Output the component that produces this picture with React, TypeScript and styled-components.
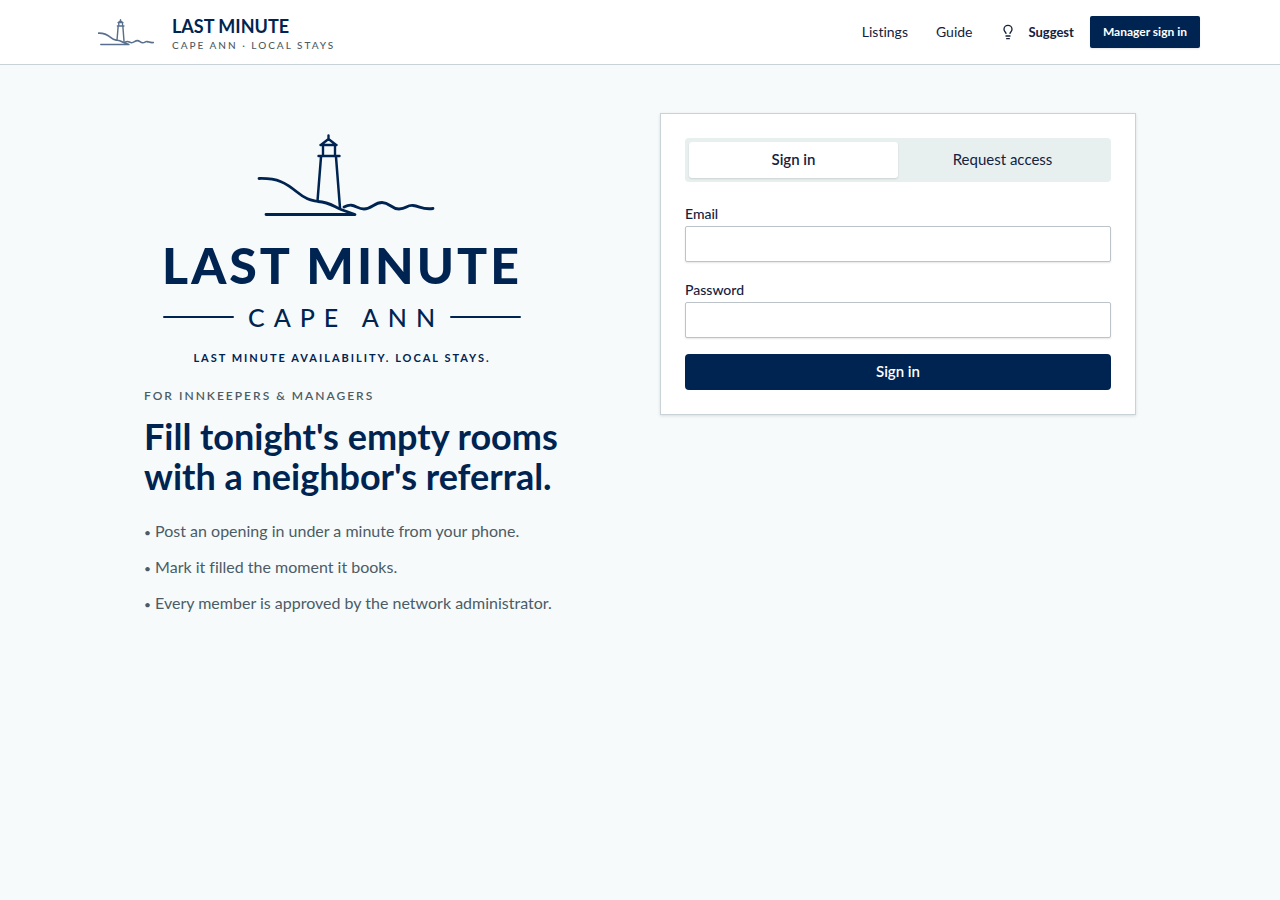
import React, { useState } from "react";
import styled, { createGlobalStyle } from "styled-components";
import { Lightbulb } from "lucide-react";

const navy = "#002451";
const ink = "#14213d";
const muted = "#4b5c66";
const line = "#c9d2d6";
const brandFont = `Lato, "Liberation Sans", sans-serif`;

const GlobalStyle = createGlobalStyle`
  * { box-sizing: border-box; }
  body {
    margin: 0;
    background: #f6fafb;
    color: ${ink};
    font-family: Lato, "Liberation Sans", sans-serif;
    font-size: 16px;
    line-height: 24px;
    font-variant-ligatures: none;
  }
  button, input { font: inherit; color: inherit; }
  h1, p, ul { margin: 0; padding: 0; }
`;

const Header = styled.header`
  background: #fff;
  border-bottom: 1px solid ${line};
`;

const HeaderInner = styled.div`
  max-width: 1152px;
  min-height: 64px;
  margin: 0 auto;
  padding: 0 16px;
  display: flex;
  align-items: center;
  justify-content: space-between;
`;

const Brand = styled.a`
  display: flex;
  align-items: center;
  gap: 18px;
  padding-left: 18px;
  text-decoration: none;
  color: ${navy};
`;

const BrandMark = styled.svg`
  width: 56px;
  height: 28px;
  opacity: 0.65;
`;

const BrandText = styled.span`
  display: flex;
  flex-direction: column;
  padding-top: 4px;
`;

const BrandName = styled.span`
  font: 700 18px/22px ${brandFont};
`;

const BrandSub = styled.span`
  font-size: 10px;
  line-height: 16px;
  font-weight: 500;
  letter-spacing: 2px;
  text-transform: uppercase;
  color: ${muted};
`;

const Nav = styled.nav`
  display: flex;
  align-items: center;
  gap: 28px;
`;

const NavLink = styled.a`
  font-size: 14px;
  line-height: 20px;
  color: ${ink};
  text-decoration: none;
`;

const Actions = styled.div`
  display: flex;
  align-items: center;
  gap: 16px;
`;

const SmallButton = styled.button<{ $solid?: boolean }>`
  display: flex;
  align-items: center;
  gap: 12px;
  height: 32px;
  padding: ${(p) => (p.$solid ? "0 13px" : "0")};
  border: 0;
  border-radius: 2px;
  background: ${(p) => (p.$solid ? navy : "transparent")};
  color: ${(p) => (p.$solid ? "#fff" : ink)};
  box-shadow: ${(p) => (p.$solid ? "0 1px 2px rgba(0, 0, 0, 0.1)" : "none")};
  font-size: ${(p) => (p.$solid ? "12px" : "13px")};
  font-weight: 700;
  cursor: pointer;
`;

const Main = styled.main`
  max-width: 1024px;
  margin: 0 auto;
  padding: 48px 16px;
  display: grid;
  grid-template-columns: 1fr 1fr;
  gap: 40px;
  align-items: start;

  @media (max-width: 768px) {
    grid-template-columns: 1fr;
  }
`;

const Logo = styled.div`
  width: 396px;
  max-width: 100%;
  padding-top: 20px;
  display: flex;
  flex-direction: column;
  align-items: center;
  color: ${navy};
`;

const LogoMark = styled.svg`
  width: 180px;
  height: 84px;
  margin-left: 8px;
`;

const Wordmark = styled.span`
  margin-top: 20px;
  font: 900 50px/56px ${brandFont};
  letter-spacing: 3px;
  white-space: nowrap;
`;

const PlaceRow = styled.span`
  width: 358px;
  max-width: 100%;
  margin-top: 8px;
  display: flex;
  align-items: center;
  gap: 14px;

  &::before,
  &::after {
    content: "";
    flex: 1;
    height: 2px;
    border-radius: 1px;
    background: currentColor;
  }
`;

const Place = styled.span`
  font: 500 25px/32px ${brandFont};
  letter-spacing: 9px;
  margin-right: -8px;
  white-space: nowrap;
`;

const Tagline = styled.span`
  margin-top: 17px;
  font: 700 11px/16px ${brandFont};
  letter-spacing: 2px;
`;

const Eyebrow = styled.p`
  margin-top: 22px;
  font-size: 12px;
  line-height: 16px;
  font-weight: 600;
  letter-spacing: 2px;
  text-transform: uppercase;
  color: ${muted};
`;

const Title = styled.h1`
  margin-top: 12px;
  font: 700 36px/40px ${brandFont};
  color: ${navy};
`;

const Points = styled.ul`
  margin-top: 23px;
  display: flex;
  flex-direction: column;
  gap: 12px;
  list-style: none;
  color: ${muted};
`;

const Bullet = styled.span`
  font-size: 12px;
  line-height: 12px;
`;

const Card = styled.section`
  padding: 24px;
  background: #fff;
  border: 1px solid ${line};
  box-shadow: 0 1px 3px rgba(0, 0, 0, 0.12);
`;

const Tabs = styled.div`
  display: grid;
  grid-template-columns: 1fr 1fr;
  padding: 4px;
  border-radius: 4px;
  background: #e8efef;
`;

const Tab = styled.button<{ $active: boolean }>`
  height: 36px;
  padding: 0 12px 2px;
  border: 0;
  border-radius: 3px;
  background: ${(p) => (p.$active ? "#fff" : "transparent")};
  box-shadow: ${(p) => (p.$active ? "0 1px 2px rgba(0, 0, 0, 0.12)" : "none")};
  font-size: 15px;
  font-weight: ${(p) => (p.$active ? 600 : 400)};
  cursor: pointer;
`;

const Form = styled.form`
  margin-top: 20px;
  display: flex;
  flex-direction: column;
  gap: 16px;
`;

const Field = styled.div`
  display: flex;
  flex-direction: column;
`;

const Label = styled.label`
  font-size: 14px;
  line-height: 24px;
  font-weight: 500;
`;

const Input = styled.input`
  width: 100%;
  height: 36px;
  padding: 0 12px;
  border: 1px solid #bcc4c9;
  border-radius: 2px;
  background: #fff;
  box-shadow: 0 1px 2px rgba(0, 0, 0, 0.1);
`;

const Submit = styled.button`
  height: 36px;
  padding: 0 12px 2px;
  border: 0;
  border-radius: 4px;
  background: ${navy};
  color: #fff;
  font-size: 15px;
  font-weight: 600;
  cursor: pointer;
`;

const Lighthouse = ({ strokeWidth }: { strokeWidth: number }) => (
  <g fill="none" stroke="currentColor" strokeWidth={strokeWidth} strokeLinecap="round" strokeLinejoin="round">
    <path d="M259 178.500C278 178 286 183 297 192S312 200 318 201.500C330 202 334 207 341 209.500L355 214.500H266" />
    <path d="M321 157L317.500 201M336 157L340 208" strokeWidth={strokeWidth * 0.9} />
    <path
      d="M318.500 156H339.500M323 146V155M335 146V155M320.500 145H336.500M321.500 144.500L328.500 139L335.500 144.500M328.500 135.500V139"
      strokeWidth={strokeWidth * 0.85}
    />
    <path d="M344 207C354 202 356 209 364 209S374 202.500 382 202.500S391 209 399 209S406 205 413 205.500S422 210 433 208.500" />
  </g>
);

const POINTS = [
  "Post an opening in under a minute from your phone.",
  "Mark it filled the moment it books.",
  "Every member is approved by the network administrator.",
];

export default function App() {
  const [tab, setTab] = useState("signin");
  return (
    <>
      <GlobalStyle />
      <Header>
        <HeaderInner>
          <Brand href="#">
            <BrandMark viewBox="257 132 178 86" aria-hidden="true">
              <Lighthouse strokeWidth={5} />
            </BrandMark>
            <BrandText>
              <BrandName>LAST MINUTE</BrandName>
              <BrandSub>Cape Ann · Local Stays</BrandSub>
            </BrandText>
          </Brand>
          <Nav>
            <NavLink href="#listings">Listings</NavLink>
            <NavLink href="#guide">Guide</NavLink>
            <Actions>
              <SmallButton type="button">
                <Lightbulb size={16} strokeWidth={2} />
                Suggest
              </SmallButton>
              <SmallButton type="button" $solid>
                Manager sign in
              </SmallButton>
            </Actions>
          </Nav>
        </HeaderInner>
      </Header>
      <Main>
        <section>
          <Logo>
            <LogoMark viewBox="256 133 180 84" aria-hidden="true">
              <Lighthouse strokeWidth={2.8} />
            </LogoMark>
            <Wordmark>LAST MINUTE</Wordmark>
            <PlaceRow>
              <Place>CAPE ANN</Place>
            </PlaceRow>
            <Tagline>LAST MINUTE AVAILABILITY. LOCAL STAYS.</Tagline>
          </Logo>
          <Eyebrow>For innkeepers &amp; managers</Eyebrow>
          <Title>Fill tonight's empty rooms with a neighbor's referral.</Title>
          <Points>
            {POINTS.map((p) => (
              <li key={p}>
                <Bullet>•</Bullet> {p}
              </li>
            ))}
          </Points>
        </section>
        <Card>
          <Tabs role="tablist">
            <Tab type="button" role="tab" aria-selected={tab === "signin"} $active={tab === "signin"} onClick={() => setTab("signin")}>
              Sign in
            </Tab>
            <Tab type="button" role="tab" aria-selected={tab === "request"} $active={tab === "request"} onClick={() => setTab("request")}>
              Request access
            </Tab>
          </Tabs>
          <Form onSubmit={(e) => e.preventDefault()}>
            <Field>
              <Label htmlFor="email">Email</Label>
              <Input id="email" type="email" />
            </Field>
            <Field>
              <Label htmlFor="password">Password</Label>
              <Input id="password" type="password" />
            </Field>
            <Submit type="submit">Sign in</Submit>
          </Form>
        </Card>
      </Main>
    </>
  );
}
